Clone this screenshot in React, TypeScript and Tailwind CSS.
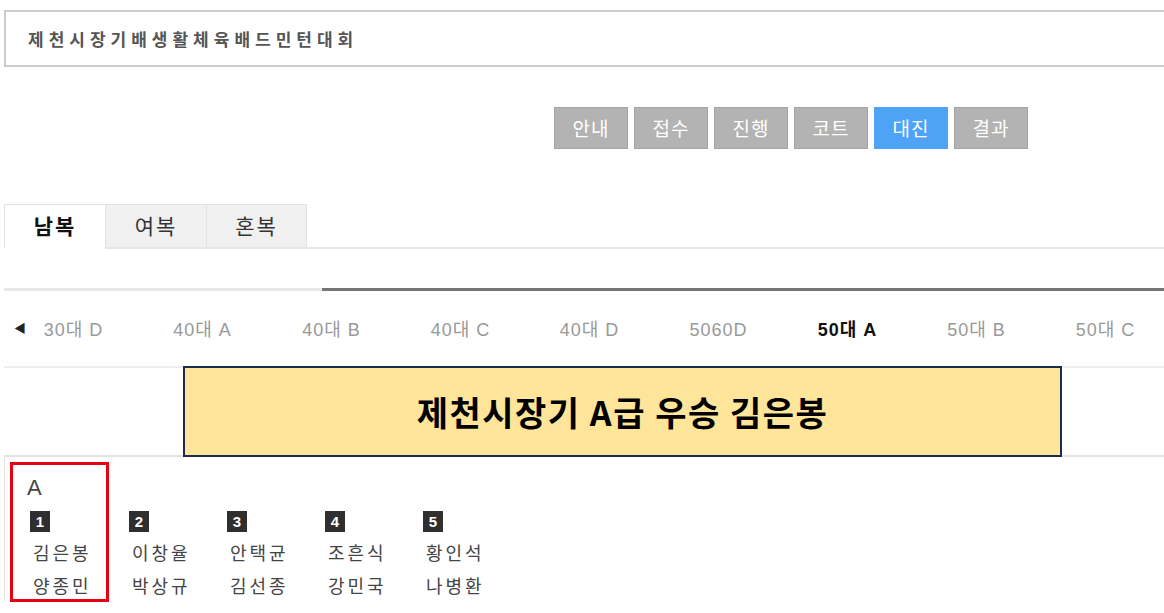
import { Fragment } from 'react';

const steps = ['안내', '접수', '진행', '코트', '대진', '결과'];
const tabs = ['남복', '여복', '혼복'];
const groups = ['30대 D', '40대 A', '40대 B', '40대 C', '40대 D', '5060D', '50대 A', '50대 B', '50대 C'];

const teams = [
  { no: 1, names: ['김은봉', '양종민'] },
  { no: 2, names: ['이창율', '박상규'] },
  { no: 3, names: ['안택균', '김선종'] },
  { no: 4, names: ['조흔식', '강민국'] },
  { no: 5, names: ['황인석', '나병환'] },
];

const kr = { fontFamily: '"Noto Sans CJK KR", "Liberation Sans", sans-serif' };
const latin = { fontFamily: '"Liberation Sans", "Noto Sans CJK KR", sans-serif' };

const Team = ({ no, names }: { no: number; names: string[] }) => (
  <Fragment>
    <div className="w-[20px] h-[21px] bg-[#2f2f2f] text-white text-[15px] font-bold leading-[21px] text-center" style={latin}>
      {no}
    </div>
    <div className="mt-[4px] pl-[3px]">
      {names.map((n) => (
        <div key={n} className="h-[33px] text-[18px] leading-[33px] tracking-[3px] text-[#444] whitespace-nowrap">
          {n}
        </div>
      ))}
    </div>
  </Fragment>
);

export default function App() {
  return (
    <div className="w-[1164px] h-[613px] overflow-hidden bg-white pl-[4px]" style={kr}>
      {/* header */}
      <div className="mt-[10px] h-[57px] w-[1200px] border-2 border-[#cccccc] flex items-center pl-[22px]">
        <span className="text-[17px] font-bold tracking-[5px] text-[#555]">제천시장기배생활체육배드민턴대회</span>
      </div>

      {/* step buttons */}
      <div className="mt-[40px] ml-[550px] flex gap-[6px]">
        {steps.map((s) => (
          <div
            key={s}
            className={`w-[74px] h-[42px] flex items-center justify-center text-[19px] tracking-[1px] text-white border ${
              s === '대진' ? 'bg-[#4fa3f7] border-[#4fa3f7]' : 'bg-[#b3b3b3] border-[#a4a4a4]'
            }`}
          >
            {s}
          </div>
        ))}
      </div>

      {/* tabs */}
      <div className="mt-[55px] flex w-[1200px] border-b-2 border-[#e6e6e6]">
        {tabs.map((t, i) => (
          <div
            key={t}
            className={`w-[101px] h-[45px] -mb-[2px] flex items-center justify-center text-[21px] tracking-[2px] border-t border-l border-[#e3e3e3] ${
              i === 0 ? 'bg-white font-bold text-[#111] border-b-2 border-b-white' : 'bg-[#f0f0f0] text-[#333] border-b-2 border-b-[#e6e6e6]'
            } ${i === 2 ? 'border-r' : ''}`}
          >
            {t}
          </div>
        ))}
      </div>

      {/* group scroller */}
      <div className="mt-[39px] w-[1200px] flex h-[3px]">
        <div className="w-[318px] bg-[#e8e8e8]" />
        <div className="flex-1 bg-[#767676]" />
      </div>
      <div className="relative h-[77px] w-[1200px] border-b-2 border-[#eeeeee] flex items-center pl-[5px] pt-[3px]" style={latin}>
        <span className="absolute left-[10px] top-1/2 -translate-y-1/2 text-[12px] text-[#222]">◀</span>
        {groups.map((g) => (
          <div
            key={g}
            className={`w-[129px] shrink-0 text-center text-[18px] tracking-[1px] ${g === '50대 A' ? 'font-bold text-[#111]' : 'text-[#999]'}`}
          >
            {g}
          </div>
        ))}
      </div>

      {/* winner banner */}
      <div className="-mt-[2px] ml-[179px] w-[879px] h-[91px] relative z-10 bg-[#ffe599] border-2 border-[#1c2c4c] flex items-center justify-center">
        <span className="text-[34px] font-bold text-black tracking-[1.5px]">제천시장기 A급 우승 김은봉</span>
      </div>

      {/* bracket group */}
      <div className="-mt-[2px] w-[1200px] border-t-2 border-l border-[#e3e3e3] pl-[5px] pt-[5px]">
        <div className="flex items-start">
          <div className="w-[99px] h-[140px] border-[3px] border-[#e60012] pl-[17px] pt-[10px]">
            <div className="-ml-[3px] text-[22px] leading-[26px] text-[#444] mb-[10px]" style={latin}>A</div>
            <Team {...teams[0]} />
          </div>
          {teams.slice(1).map((t) => (
            <div key={t.no} className="w-[98px] pl-[20px] pt-[49px]">
              <Team {...t} />
            </div>
          ))}
        </div>
      </div>
    </div>
  );
}
